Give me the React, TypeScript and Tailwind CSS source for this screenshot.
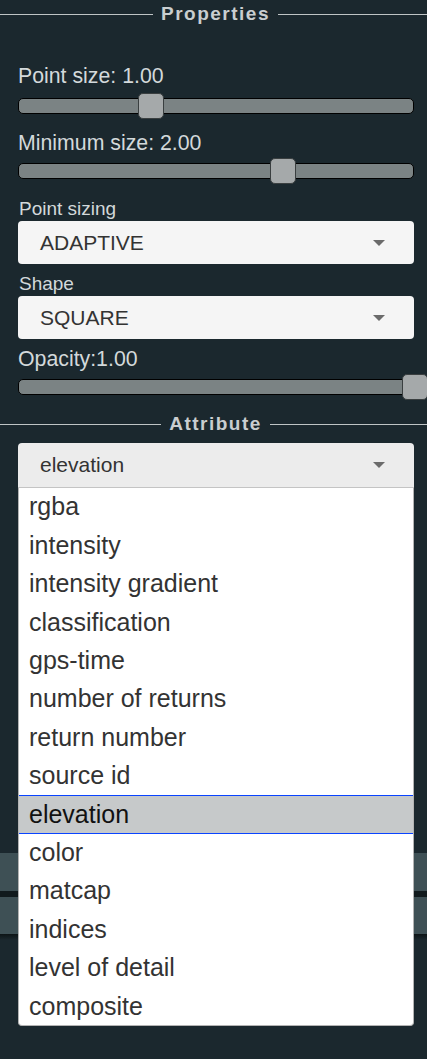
import React from 'react'

const attributes = [
  'rgba',
  'intensity',
  'intensity gradient',
  'classification',
  'gps-time',
  'number of returns',
  'return number',
  'source id',
  'elevation',
  'color',
  'matcap',
  'indices',
  'level of detail',
  'composite',
]

function Legend({ title, className = '' }: { title: string; className?: string }) {
  return (
    <div className={`flex h-[22px] items-center gap-2 ${className}`}>
      <div className="h-px flex-[1_1_4px] bg-[#bfc4c5]" />
      <span className="text-[19px] font-bold leading-[22px] tracking-[1.5px] text-[#c9ced0]">{title}</span>
      <div className="h-px flex-1 bg-[#bfc4c5]" />
    </div>
  )
}

function Slider({ thumb, className = '' }: { thumb: string; className?: string }) {
  return (
    <div className={`relative h-4 rounded-[5px] border border-black bg-[#7b8384] ${className}`}>
      <div className={`absolute top-1/2 h-[26px] w-[26px] -translate-y-1/2 rounded-[5px] border border-[#3a3f40] bg-[#a5a9aa] ${thumb}`} />
    </div>
  )
}

function Arrow() {
  return <div className="h-0 w-0 border-x-[6px] border-t-[6px] border-x-transparent border-t-[#6b6b6b]" />
}

function Select({ value, className = '' }: { value: string; className?: string }) {
  return (
    <div className={`flex h-[43px] items-center justify-between rounded-[4px] bg-[#f5f5f5] pl-[22px] pr-[29px] ${className}`}>
      <span className="text-[21px] leading-6 text-[#333]">{value}</span>
      <Arrow />
    </div>
  )
}

export default function App() {
  return (
    <div className="min-h-[1059px] overflow-hidden bg-[#1b282e] pt-[3px]" style={{ fontFamily: '"Liberation Sans", Arial, sans-serif' }}>
      <Legend title="Properties" />

      <div className="pl-[18px] pr-[13px]">
        {/* Point size */}
        <div className="mt-[39px] text-[21.3px] leading-6 text-[#d3d9db]">Point size: 1.00</div>
        <Slider className="mt-[10px]" thumb="left-[119px]" />

        {/* Minimum size */}
        <div className="mt-[17px] text-[21.3px] leading-6 text-[#d3d9db]">Minimum size: 2.00</div>
        <Slider className="mt-[8px]" thumb="left-[251px]" />

        <div className="mt-[19px] pl-px text-[19px] leading-[22px] text-[#d3d9db]">Point sizing</div>
        <Select className="mt-px" value="ADAPTIVE" />

        <div className="mt-[9px] pl-px text-[19px] leading-[22px] text-[#d3d9db]">Shape</div>
        <Select className="mt-px" value="SQUARE" />

        <div className="mt-[8px] text-[21.3px] leading-6 text-[#d3d9db]">Opacity:1.00</div>
        <Slider className="mt-[8px]" thumb="left-[383px]" />
      </div>

      <Legend title="Attribute" className="mt-[18px]" />

      <div className="mt-[8px] pl-[18px] pr-[13px]">
        <div className="relative">
          <div className="flex h-[45px] items-center justify-between rounded-t-[4px] border-b border-[#c4c4c4] bg-[#ececec] pl-[22px] pr-[29px]">
            <span className="text-[21px] leading-6 text-[#333]">elevation</span>
            <Arrow />
          </div>

          {/* open menu */}
          <ul className="absolute left-0 right-0 top-full z-10 rounded-b-[4px] border-x border-b border-[#b3b3b3] bg-white">
            {attributes.map((a) => (
              <li
                key={a}
                className={
                  a === 'elevation'
                    ? 'flex h-[38.4px] items-center border-y border-[#0a44ff] bg-[#c6c9ca] pl-[10px] text-[25px] text-[#111]'
                    : 'flex h-[38.4px] items-center pl-[10px] text-[25px] text-[#333]'
                }
              >
                {a}
              </li>
            ))}
          </ul>
        </div>
      </div>

      {/* collapsed sections behind the menu */}
      <div className="mt-[365px]">
        <div className="h-[38px] bg-[#3e5055]" />
        <div className="h-[6px] bg-[#111a1d]" />
        <div className="h-[37px] bg-[#3e5055]" />
        <div className="h-[6px] bg-gradient-to-b from-[#0d1416] to-[#1b282e]" />
      </div>
    </div>
  )
}
